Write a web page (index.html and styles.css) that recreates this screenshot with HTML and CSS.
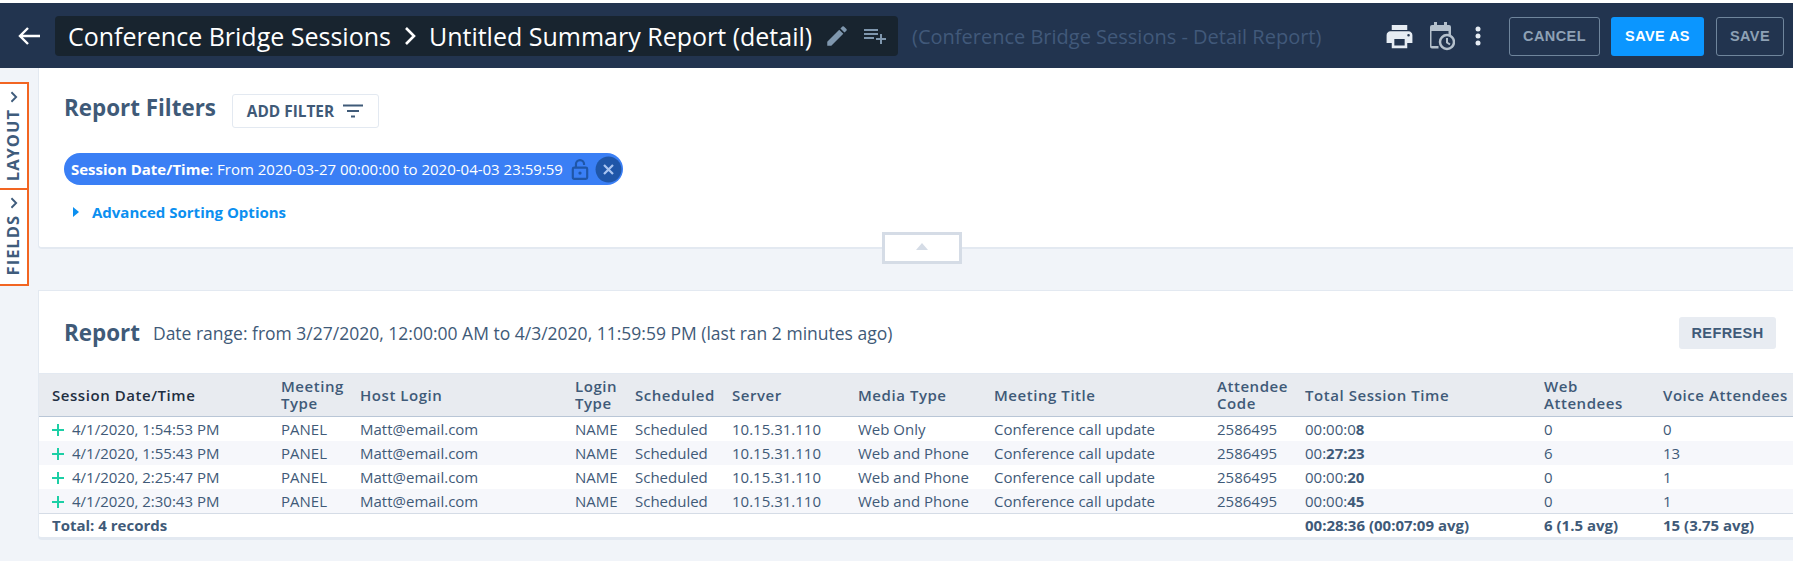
FILE: index.html
```html
<!DOCTYPE html>
<html lang="en">
<head>
<meta charset="utf-8">
<title>Conference Bridge Sessions</title>
<link rel="stylesheet" href="styles.css">
</head>
<body>
<header class="topbar">
  <svg class="back" width="24" height="20" viewBox="0 0 24 20"><path d="M23 10H3M11 2l-8 8 8 8" fill="none" stroke="#fff" stroke-width="2.4"/></svg>
  <div class="titlebox">
    <span class="crumb">Conference Bridge Sessions</span>
    <svg class="crumb-sep" width="14" height="20" viewBox="0 0 14 20"><path d="M3 2l8 8-8 8" fill="none" stroke="#fff" stroke-width="2.6"/></svg>
    <span class="crumb">Untitled Summary Report (detail)</span>
    <svg class="pencil" width="26" height="26" viewBox="0 0 24 24"><path fill="#7f97ae" d="M3 17.25V21h3.75L17.81 9.94l-3.75-3.75L3 17.25zM20.71 7.04a1 1 0 0 0 0-1.41l-2.34-2.34a1 1 0 0 0-1.41 0l-1.83 1.83 3.75 3.75 1.83-1.83z"/></svg>
    <svg class="addlist" width="24" height="24" viewBox="0 0 24 24"><path fill="#7f97ae" d="M2 5h14v2H2zm0 4h14v2H2zm0 4h10v2H2zm16 1v-4h2v4h4v2h-4v4h-2v-4h-4v-2z"/></svg>
  </div>
  <span class="subtitle">(Conference Bridge Sessions - Detail Report)</span>
  <div class="tools">
    <svg width="31" height="31" viewBox="0 0 24 24"><path fill="#e6ecf3" d="M19 8H5c-1.66 0-3 1.34-3 3v6h4v4h12v-4h4v-6c0-1.66-1.34-3-3-3zm-3 11H8v-5h8v5zm3-7a1 1 0 1 1 0-2 1 1 0 0 1 0 2zM18 3H6v4h12V3z"/></svg>
    <svg class="cal" width="26" height="30" viewBox="0 0 26 30"><path fill="#b4c0cc" d="M5 1h3v3h7V1h3v3h2a2 2 0 0 1 2 2v9h-2.500V10h-17v15h7v2.500H3a2 2 0 0 1-2-2V6a2 2 0 0 1 2-2h2z"/><circle cx="18" cy="21" r="7" fill="#22344f" stroke="#b4c0cc" stroke-width="2.500"/><path d="M18 17v4.500l3 2" fill="none" stroke="#b4c0cc" stroke-width="2"/></svg>
    <svg class="dots" width="6" height="24" viewBox="0 0 6 24"><circle cx="3" cy="5" r="2.500" fill="#e6ecf3"/><circle cx="3" cy="12" r="2.500" fill="#e6ecf3"/><circle cx="3" cy="19" r="2.500" fill="#e6ecf3"/></svg>
  </div>
  <button class="btn btn-outline btn-cancel">CANCEL</button>
  <button class="btn btn-primary">SAVE AS</button>
  <button class="btn btn-outline btn-save">SAVE</button>
</header>

<div class="body-row">
  <aside class="rail">
    <div class="rail-box">
      <div class="rail-tab rail-layout"><svg width="12" height="16" viewBox="0 0 14 9" class="rail-chev"><path d="M1.500 1.500L7 7l5.500-5.500" fill="none" stroke="#3f5c7c" stroke-width="2.200"/></svg><span class="rail-text">LAYOUT</span></div>
      <div class="rail-tab rail-fields"><svg width="12" height="16" viewBox="0 0 14 9" class="rail-chev"><path d="M1.500 1.500L7 7l5.500-5.500" fill="none" stroke="#3f5c7c" stroke-width="2.200"/></svg><span class="rail-text">FIELDS</span></div>
    </div>
  </aside>

  <main class="content">
    <section class="card filters">
      <div class="filters-head">
        <h2 class="heading">Report Filters</h2>
        <button class="addfilter">ADD FILTER
          <svg width="22" height="16" viewBox="0 0 22 16"><path d="M1 2.500h20M5 8h12M9 13.500h4" stroke="#3f5a78" stroke-width="2" fill="none"/></svg>
        </button>
      </div>
      <div class="chip">
        <span class="chip-text"><b>Session Date/Time</b>: From 2020-03-27 00:00:00 to 2020-04-03 23:59:59</span>
        <svg class="chip-lock" width="18" height="23" viewBox="0 0 20 24"><path d="M5.500 10V6a4.500 4.500 0 0 1 9 0v1" fill="none" stroke="#1f56a8" stroke-width="2.400"/><rect x="2" y="10" width="16" height="12.500" rx="1.500" fill="none" stroke="#1f56a8" stroke-width="2.400"/><circle cx="10" cy="16" r="1.800" fill="#1f56a8"/></svg>
        <svg class="chip-x" width="27" height="27" viewBox="0 0 24 24"><circle cx="12" cy="12" r="11.500" fill="#1f56a8"/><path d="M8 8l8 8M16 8l-8 8" stroke="#a9c4f0" stroke-width="2"/></svg>
      </div>
      <div class="advanced">
        <svg width="6" height="10" viewBox="0 0 6 10"><path d="M0 0l6 5-6 5z" fill="#0b8ff0"/></svg>
        <a class="advanced-link">Advanced Sorting Options</a>
      </div>
      <div class="handle"><svg width="12" height="7" viewBox="0 0 12 7"><path d="M6 0l6 7H0z" fill="#d5dce6"/></svg></div>
    </section>

    <section class="card report">
      <div class="report-head">
        <h2 class="heading">Report</h2>
        <span class="range">Date range: from 3/27/2020, 12:00:00 AM to 4/3/2020, 11:59:59 PM (last ran 2 minutes ago)</span>
        <button class="refresh">REFRESH</button>
      </div>
      <table class="grid">
        <colgroup>
          <col class="c1"><col class="c2"><col class="c3"><col class="c4"><col class="c5"><col class="c6"><col class="c7"><col class="c8"><col class="c9"><col class="c10"><col class="c11"><col class="c12">
        </colgroup>
        <thead>
          <tr>
            <th class="first">Session Date/Time</th><th>Meeting Type</th><th>Host Login</th><th>Login Type</th><th>Scheduled</th><th>Server</th><th>Media Type</th><th>Meeting Title</th><th>Attendee Code</th><th>Total Session Time</th><th>Web Attendees</th><th>Voice Attendees</th>
          </tr>
        </thead>
        <tbody>
          <tr><td><svg class="plus" width="12" height="12" viewBox="0 0 12 12"><path d="M6 0v12M0 6h12" stroke="#1ccfa5" stroke-width="2"/></svg>4/1/2020, 1:54:53 PM</td><td>PANEL</td><td>Matt@email.com</td><td>NAME</td><td>Scheduled</td><td>10.15.31.110</td><td>Web Only</td><td>Conference call update</td><td>2586495</td><td>00:00:0<b>8</b></td><td>0</td><td>0</td></tr>
          <tr><td><svg class="plus" width="12" height="12" viewBox="0 0 12 12"><path d="M6 0v12M0 6h12" stroke="#1ccfa5" stroke-width="2"/></svg>4/1/2020, 1:55:43 PM</td><td>PANEL</td><td>Matt@email.com</td><td>NAME</td><td>Scheduled</td><td>10.15.31.110</td><td>Web and Phone</td><td>Conference call update</td><td>2586495</td><td>00:<b>27:23</b></td><td>6</td><td>13</td></tr>
          <tr><td><svg class="plus" width="12" height="12" viewBox="0 0 12 12"><path d="M6 0v12M0 6h12" stroke="#1ccfa5" stroke-width="2"/></svg>4/1/2020, 2:25:47 PM</td><td>PANEL</td><td>Matt@email.com</td><td>NAME</td><td>Scheduled</td><td>10.15.31.110</td><td>Web and Phone</td><td>Conference call update</td><td>2586495</td><td>00:00:<b>20</b></td><td>0</td><td>1</td></tr>
          <tr><td><svg class="plus" width="12" height="12" viewBox="0 0 12 12"><path d="M6 0v12M0 6h12" stroke="#1ccfa5" stroke-width="2"/></svg>4/1/2020, 2:30:43 PM</td><td>PANEL</td><td>Matt@email.com</td><td>NAME</td><td>Scheduled</td><td>10.15.31.110</td><td>Web and Phone</td><td>Conference call update</td><td>2586495</td><td>00:00:<b>45</b></td><td>0</td><td>1</td></tr>
        </tbody>
        <tfoot>
          <tr><td colspan="9">Total: 4 records</td><td>00:28:36 (00:07:09 avg)</td><td>6 (1.5 avg)</td><td>15 (3.75 avg)</td></tr>
        </tfoot>
      </table>
    </section>
  </main>
</div>
</body>
</html>
```
FILE: styles.css
```css
* { box-sizing: border-box; }
html, body { margin: 0; height: 100%; }
body {
  background: #f1f4f9;
  font-family: "Open Sans", sans-serif;
  color: #3f5a78;
  overflow: hidden;
}
.topbar {
  height: 68px;
  background: #22344f;
  border-top: 3px solid #fff;
  display: flex;
  align-items: center;
  padding: 1px 10px 0 17px;
}
.back { flex: none; }
.titlebox {
  height: 40px;
  width: 843px;
  margin-left: 14px;
  background: #18242f;
  border-radius: 4px;
  display: flex;
  align-items: center;
  padding-left: 13px;
  flex: none;
}
.crumb { color: #fff; font-size: 25px; white-space: nowrap; }
.crumb-sep { margin: 0 12px; flex: none; }
.pencil { margin-left: 12px; flex: none; }
.addlist { margin-left: 12px; flex: none; }
.subtitle {
  margin-left: 14px;
  color: #41597a;
  font-size: 20px;
  white-space: nowrap;
  width: 472px;
  flex: none;
}
.tools { display: flex; align-items: center; width: 124px; flex: none; }
.cal { margin-left: 14px; }
.dots { margin-left: 20px; }
.btn {
  height: 39px;
  border-radius: 3px;
  font-family: "Liberation Sans", sans-serif;
  font-weight: 700;
  font-size: 14.5px;
  letter-spacing: .4px;
  flex: none;
  padding: 0;
}
.btn-outline { background: transparent; border: 1px solid #6f859c; color: #8ea1b5; }
.btn-cancel { width: 91px; margin-left: 1px; }
.btn-primary { width: 93px; margin-left: 11px; background: #0b96ff; border: 0; color: #fff; }
.btn-save { width: 68px; margin-left: 12px; }

.body-row { display: flex; }
.rail { width: 38px; flex: none; padding-top: 14px; }
.rail-box {
  width: 29px;
  border: 2px solid #f26522;
  border-left: 0;
  background: #fff;
}
.rail-tab {
  display: flex;
  flex-direction: column;
  align-items: center;
  padding-top: 5px;
  gap: 4px;
}
.rail-layout { height: 106px; border-bottom: 2px solid #f26522; }
.rail-fields { height: 94px; }
.rail-chev { transform: rotate(-90deg); flex: none; }
.rail-text {
  writing-mode: vertical-rl;
  transform: rotate(180deg);
  font-weight: 700;
  font-size: 16.5px;
  letter-spacing: 1px;
  color: #3f5c7c;
  line-height: 1;
}
.content { flex: 1; min-width: 0; }
.card { background: #fff; border: 1px solid #e3e9f1; border-width: 0 0 2px 1px; border-radius: 0 0 0 4px; }
.filters { height: 181px; position: relative; padding: 26px 0 0 25px; }
.filters-head { display: flex; align-items: flex-start; gap: 16px; }
.heading { margin: 0; font-size: 22.4px; font-weight: 700; color: #3f5a78; line-height: 28px; }
.addfilter {
  height: 34px;
  width: 147px;
  background: #fff;
  border: 1px solid #e3e9f1;
  border-radius: 3px;
  font-family: "Open Sans", sans-serif;
  font-size: 15.4px;
  font-weight: 700;
  color: #3f5a78;
  display: flex;
  align-items: center;
  justify-content: center;
  gap: 8px;
  padding: 0;
}
.chip {
  margin-top: 25px;
  width: 559px;
  height: 32px;
  border-radius: 16px;
  background: #3a7ff5;
  color: #fff;
  display: flex;
  align-items: center;
  padding-left: 7px;
  font-size: 15px;
  white-space: nowrap;
}
.chip-lock { margin-left: 8px; flex: none; }
.chip-x { margin-left: 6px; flex: none; }
.advanced { margin-top: 17px; display: flex; align-items: center; gap: 13px; padding-left: 9px; }
.advanced-link { color: #0b8ff0; font-size: 15px; font-weight: 700; }
.handle {
  position: absolute;
  left: 843px;
  top: 164px;
  width: 80px;
  height: 32px;
  background: #fff;
  border: 3px solid #d5dce6;
  display: flex;
  justify-content: center;
  padding-top: 8px;
}
.report { margin-top: 41px; border-top-width: 1px; border-bottom-width: 3px; }
.report-head { height: 82px; display: flex; align-items: center; padding: 2px 17px 0 25px; }
.range { margin-left: 13px; font-size: 17.5px; color: #3f5a78; }
.refresh {
  margin-left: auto;
  width: 97px;
  height: 32px;
  border: 0;
  border-radius: 3px;
  background: #e8ecf2;
  color: #3f5a78;
  font-family: "Liberation Sans", sans-serif;
  font-weight: 700;
  font-size: 14.5px;
  letter-spacing: .4px;
  padding: 0;
  margin-top: -1px;
}
.grid { width: 100%; table-layout: fixed; border-collapse: collapse; font-size: 15px; color: #3f5a78; }
.c1 { width: 229px; } .c2 { width: 79px; } .c3 { width: 215px; } .c4 { width: 60px; }
.c5 { width: 97px; } .c6 { width: 126px; } .c7 { width: 136px; } .c8 { width: 223px; }
.c9 { width: 88px; } .c10 { width: 239px; } .c11 { width: 119px; } .c12 { width: 143px; }
.grid th {
  height: 43px;
  background: #e8ebf0;
  border-top: 1px solid #e3e9f1;
  border-bottom: 1px solid #b9c6d6;
  text-align: left;
  font-weight: 600;
  line-height: 17px;
  letter-spacing: .55px;
  padding: 0 0 0 13px;
  vertical-align: middle;
}
.grid th.first { color: #1f2f42; }
.grid td { height: 24px; padding: 0 0 0 13px; line-height: 24px; white-space: nowrap; }
.grid tbody tr:nth-child(even) td { background: #f6f7fb; }
.grid tfoot td { font-weight: 700; border-top: 1px solid #d5dce6; height: 23px; line-height: 22px; }
.plus { margin-right: 8px; vertical-align: -1px; }
```
